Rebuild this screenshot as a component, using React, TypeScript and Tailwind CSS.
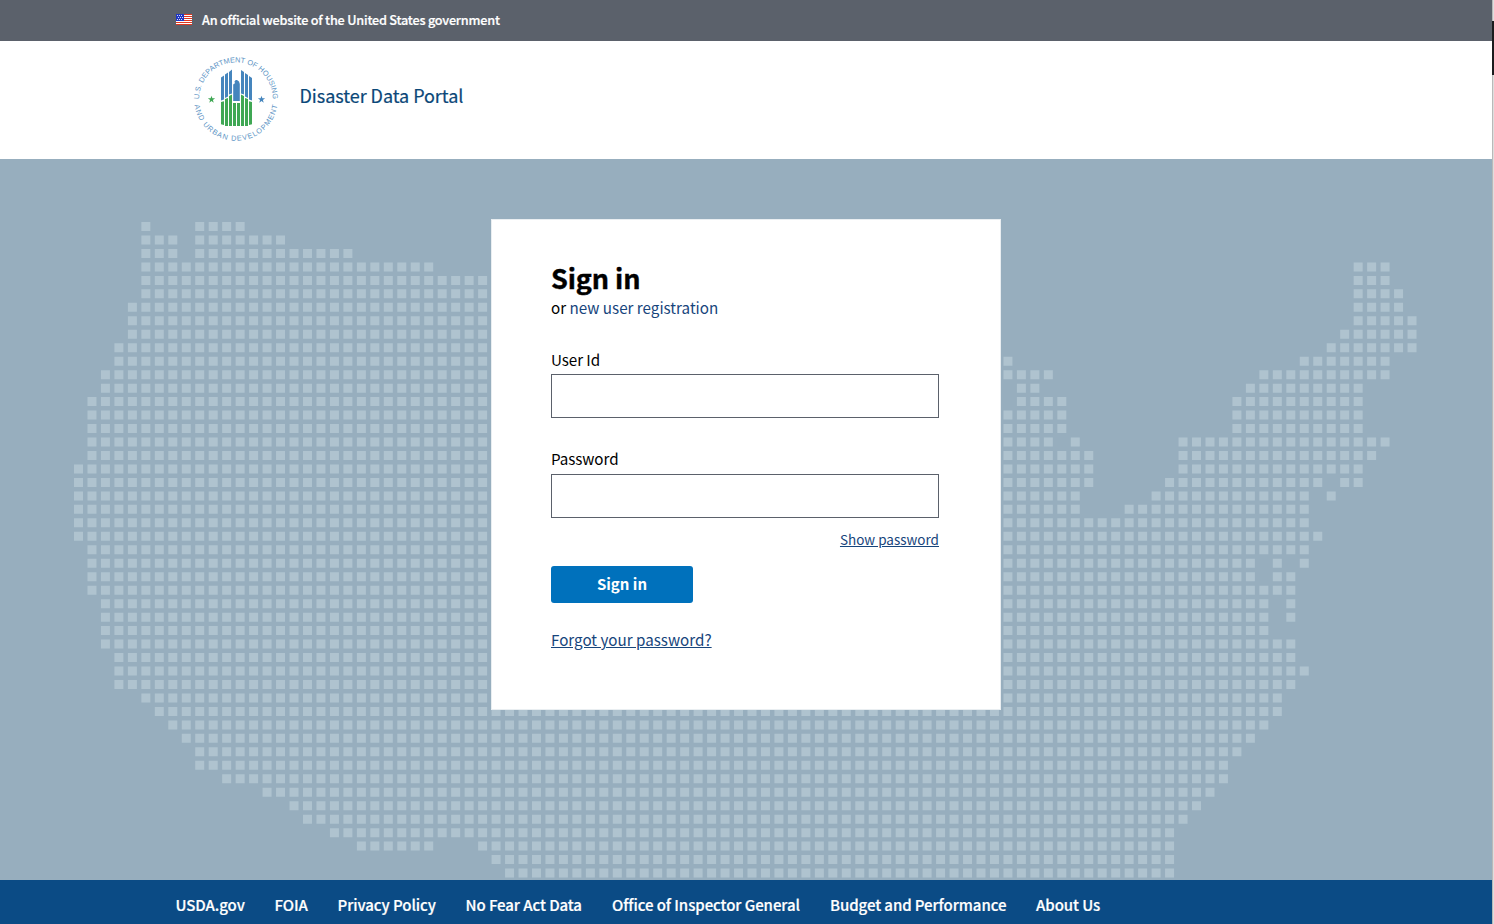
import React from "react";

const PITCH = 13.47;
const DOT = 9;

// Filled column ranges for each row of the dotted map.
const MAP_ROWS: number[][][] = [
  [[5, 5], [9, 12]],
  [[5, 7], [9, 15]],
  [[5, 7], [9, 20]],
  [[5, 26], [95, 97]],
  [[5, 40], [95, 97]],
  [[5, 45], [95, 98]],
  [[4, 50], [95, 98]],
  [[4, 55], [95, 99]],
  [[4, 60], [94, 99]],
  [[3, 60], [93, 99]],
  [[3, 60], [69, 69], [91, 97]],
  [[2, 60], [69, 72], [88, 97]],
  [[2, 60], [70, 71], [87, 95]],
  [[1, 60], [70, 73], [86, 95]],
  [[1, 73], [86, 95]],
  [[1, 73], [86, 95]],
  [[1, 72], [74, 74], [82, 97]],
  [[1, 75], [82, 96]],
  [[0, 75], [82, 95]],
  [[0, 75], [81, 92], [94, 95]],
  [[0, 74], [80, 91], [93, 93]],
  [[0, 74], [78, 91]],
  [[0, 91]],
  [[0, 92]],
  [[1, 91]],
  [[1, 87], [89, 89], [91, 91]],
  [[1, 87], [89, 90]],
  [[1, 90]],
  [[2, 88], [90, 90]],
  [[2, 88], [90, 90]],
  [[2, 88]],
  [[2, 90]],
  [[3, 90]],
  [[3, 91]],
  [[3, 90]],
  [[5, 89]],
  [[6, 89]],
  [[7, 88]],
  [[8, 87]],
  [[9, 86]],
  [[9, 85]],
  [[11, 85]],
  [[14, 84]],
  [[16, 83]],
  [[17, 82]],
  [[19, 81]],
  [[21, 26], [30, 81]],
  [[31, 81]],
  [[32, 81]],
];

const mapPath = MAP_ROWS.map((ranges, row) =>
  ranges
    .map(([from, to]) => {
      let d = "";
      for (let c = from; c <= to; c++) {
        d += `M${(74 + c * PITCH).toFixed(2)} ${(63 + row * PITCH).toFixed(2)}h${DOT}v${DOT}h-${DOT}z`;
      }
      return d;
    })
    .join("")
).join("");

function DottedMap() {
  return (
    <svg className="absolute inset-0" width="1492" height="721" viewBox="0 0 1492 721" aria-hidden="true">
      <path d={mapPath} fill="#afc3cf" />
    </svg>
  );
}

function Flag() {
  return (
    <svg className="block" width="16" height="11" viewBox="0 0 16 11" aria-hidden="true">
      <rect width="16" height="11" fill="#fff" />
      {[0, 2, 4, 6, 8, 10].map((y) => (
        <rect key={y} y={y} width="16" height="1" fill="#e0361f" />
      ))}
      <rect width="8" height="7" fill="#1f36c4" />
      {[1, 3, 5].map((y) =>
        [1, 3, 5].map((x) => (
          <rect key={`${x}-${y}`} x={x + (y === 3 ? 1 : 0)} y={y} width="1" height="1" fill="#d5daf5" />
        ))
      )}
    </svg>
  );
}

const STAR = "M0-4 .95-1.2 3.8-1.2 1.5.5 2.35 3.3 0 1.6-2.35 3.3-1.5.5-3.8-1.2-.95-1.2z";

function Seal() {
  return (
    <svg className="block" width="100" height="100" viewBox="0 0 100 100" role="img">
      <defs>
        <path id="seal-top" d="M13.1 49.3A36.9 36.9 0 0 1 86.9 49.3" />
        <path id="seal-bottom" d="M8.2 49A41.8 41.8 0 0 0 91.8 49" />
      </defs>
      <g fill="#5b93c4" fontFamily="'Liberation Sans', Arial, sans-serif" fontSize="7.3">
        <text>
          <textPath href="#seal-top" startOffset="0" textLength="115.5">U.S. DEPARTMENT OF HOUSING</textPath>
        </text>
        <text>
          <textPath href="#seal-bottom" startOffset="6" textLength="119">AND URBAN DEVELOPMENT</textPath>
        </text>
      </g>
      <g fill="#4585bd">
        <path d="M35 27.5 38 25.5V49.5L35 50.5zM39 24.5 42 22.5V46.5L39 48zM43 22 46 19.5V43.5L43 44.5zM55 20 58 22V44.5L55 43.5zM59 23 62 25V48L59 46.5zM63 26 66 28V50.5L63 49.5z" />
        <path d="M47.2 34.5 49.2 33 48.4 32C49 30.2 50 29.8 51 30.1L53 31.5 53.8 34V51H47.2z" />
      </g>
      <g fill="#3fa754">
        <path d="M35 52 38 51.3V75L35 74.3zM39 49 42 48V76H39zM43 46 46 44.6V76H43zM47 53H50V76H47zM51 53H54V76H51zM55 44.6 58 46V76H55zM59 48 62 49V76H59zM63 51.3 66 52V74.3L63 75z" />
        <path transform="translate(25.5 49.5) scale(.95)" d={STAR} />
      </g>
      <path transform="translate(75.5 49.5) scale(.95)" d={STAR} fill="#4585bd" />
    </svg>
  );
}

const FOOTER_LINKS = [
  { label: "USDA.gov", width: "w-[69px]" },
  { label: "FOIA", width: "w-[33px]" },
  { label: "Privacy Policy", width: "w-[98px]" },
  { label: "No Fear Act Data", width: "w-[116.5px]" },
  { label: "Office of Inspector General", width: "w-[188px]" },
  { label: "Budget and Performance", width: "w-[176px]" },
  { label: "About Us", width: "w-[65px]" },
];

export default function App() {
  return (
    <div className="flex h-[924px] w-[1494px] overflow-hidden bg-white font-['Noto_Sans_CJK_SC',sans-serif] text-[15.2px] leading-6 text-black">
      <div className="flex w-[1492px] flex-col">
        <div className="flex h-[41px] items-center gap-[10px] bg-[#5b616b] pb-[2px] pl-44 text-white">
          <Flag />
          <span className="text-[12.7px] font-medium tracking-[-0.22px] whitespace-nowrap [-webkit-text-stroke:0.2px_#fff]">
            An official website of the United States government
          </span>
        </div>

        <header className="flex h-[118px] items-center bg-white pl-[186px]">
          <Seal />
          <h1 className="ml-[13.5px] pb-[10px] text-[18px] tracking-[-0.04px] whitespace-nowrap text-[#0b4778] [-webkit-text-stroke:0.2px_#0b4778]">
            Disaster Data Portal
          </h1>
        </header>

        <main className="relative flex h-[721px] items-start justify-center bg-[#97aebe] pt-[60px]">
          <DottedMap />
          <form
            className="relative flex h-[491px] w-[510px] flex-col items-start border border-[#e9eef1] bg-white pt-10 pr-[61px] pl-[59px]"
            onSubmit={(e) => e.preventDefault()}
          >
            <h2 className="h-[35px] text-[27px] leading-9 font-bold tracking-[-0.1px] [-webkit-text-stroke:0.4px_#000]">
              Sign in
            </h2>
            <p className="h-6 leading-6">
              or <a className="text-[#17457c]">new user registration</a>
            </p>
            <label htmlFor="user" className="mt-7 h-6 tracking-[-0.08px]">User Id</label>
            <input id="user" className="mt-[3px] h-11 w-[388px] border border-[#5b616b] bg-white px-3 outline-none" />
            <label htmlFor="password" className="mt-7 h-6 tracking-[-0.08px]">Password</label>
            <input
              id="password"
              type="password"
              className="mt-1 h-11 w-[388px] border border-[#5b616b] bg-white px-3 outline-none"
            />
            <a className="mt-[9px] h-6 self-end text-[13.5px] text-[#17457c] underline">Show password</a>
            <button className="mt-[15px] h-[37px] w-[142px] rounded-[3px] bg-[#0071bc] pb-[2px] text-[15px] font-bold text-white">
              Sign in
            </button>
            <a className="mt-6 h-6 text-[#17457c] underline">Forgot your password?</a>
          </form>
        </main>

        <footer className="h-11 bg-[#0b4b85] pl-[175.5px] text-white">
          <nav className="flex h-[50px] items-center gap-[30px] text-[15px] font-medium tracking-[-0.07px] [-webkit-text-stroke:0.2px_#fff]">
            {FOOTER_LINKS.map((link) => (
              <a key={link.label} className={`${link.width} whitespace-nowrap`}>
                {link.label}
              </a>
            ))}
          </nav>
        </footer>
      </div>

      <div className="flex w-[2px] flex-col border-l border-[#b9b9b9] bg-[#dedede]">
        <div className="h-[21px]" />
        <div className="-ml-px h-[54px] w-[2px] bg-[#1b1c1e]" />
      </div>
    </div>
  );
}
